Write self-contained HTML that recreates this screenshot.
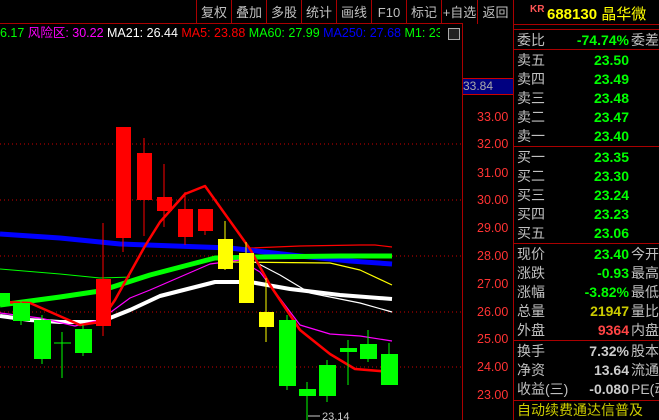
<!DOCTYPE html><html><head><meta charset="utf-8"><style>
body{margin:0;width:659px;height:420px;background:#000;overflow:hidden;position:relative;font-family:"Liberation Sans","WenQuanYi Zen Hei","Noto Sans CJK SC",sans-serif;}
.a{position:absolute;white-space:nowrap;}
.btn{position:absolute;top:0;height:24px;line-height:26px;color:#c0c0c0;font-size:13px;text-align:center;border-left:1px solid #a00;}
.r{position:absolute;left:4px;font-size:14px;color:#c0c0c0;white-space:nowrap;line-height:19px;}
.v{position:absolute;right:30px;font-weight:bold;font-size:14px;text-align:right;}
.t{position:absolute;left:114px;}
#rp{position:absolute;left:513px;top:0;width:146px;height:420px;overflow:hidden;}
</style></head><body>
<div class="btn" style="left:196px;width:34px">复权</div>
<div class="btn" style="left:231px;width:34px">叠加</div>
<div class="btn" style="left:266px;width:34px">多股</div>
<div class="btn" style="left:301px;width:34px">统计</div>
<div class="btn" style="left:336px;width:34px">画线</div>
<div class="btn" style="left:371px;width:34px">F10</div>
<div class="btn" style="left:406px;width:34px">标记</div>
<div class="btn" style="left:441px;width:35px">+自选</div>
<div class="btn" style="left:477px;width:35px">返回</div>
<div class="a" style="left:0;top:23px;width:463px;height:1px;background:#a00"></div>
<div class="a" style="left:462px;top:23px;width:1px;height:397px;background:#a00"></div>
<div class="a" style="left:513px;top:0;width:1px;height:420px;background:#a00"></div>
<div class="a" style="left:0;top:25px;width:440px;overflow:hidden;font-size:12.5px;line-height:16px">
<span style="color:#0f0">6.17 </span><span style="color:#f0f">风险区: 30.22 </span><span style="color:#fff">MA21: 26.44 </span><span style="color:#f00">MA5: 23.88 </span><span style="color:#0f0">MA60: 27.99 </span><span style="color:#00f">MA250: 27.68 </span><span style="color:#0f0">M1: 23</span><span style="color:#ccc">◇</span></div>
<div class="a" style="left:448px;top:28px;width:10px;height:10px;border:1px solid #aaa;background:#222"></div>
<div class="a" style="left:463px;top:78px;width:50px;height:15px;background:#000080;border-top:1px solid #c00;border-bottom:1px solid #c00;color:#aaa;font-size:12px;line-height:15px">33.84</div>
<div class="a" style="left:477px;top:110px;color:#f33;font-size:12.5px;line-height:14px">
<div style="position:absolute;top:0">33.00</div><div style="position:absolute;top:27px">32.00</div><div style="position:absolute;top:56px">31.00</div><div style="position:absolute;top:83px">30.00</div><div style="position:absolute;top:111px">29.00</div><div style="position:absolute;top:139px">28.00</div><div style="position:absolute;top:167px">27.00</div><div style="position:absolute;top:195px">26.00</div><div style="position:absolute;top:222px">25.00</div><div style="position:absolute;top:250px">24.00</div><div style="position:absolute;top:278px">23.00</div></div>
<svg class="a" style="left:0;top:0" width="463" height="420">
<g stroke="#c00" stroke-width="1" stroke-dasharray="1,3">
<line x1="0" y1="144" x2="463" y2="144"/><line x1="0" y1="200" x2="463" y2="200"/><line x1="0" y1="256" x2="463" y2="256"/><line x1="0" y1="312" x2="463" y2="312"/><line x1="0" y1="367" x2="463" y2="367"/></g>
<g stroke="#c00"><line x1="463" y1="117" x2="467" y2="117"/><line x1="463" y1="145" x2="467" y2="145"/><line x1="463" y1="173" x2="467" y2="173"/><line x1="463" y1="200" x2="467" y2="200"/><line x1="463" y1="228" x2="467" y2="228"/><line x1="463" y1="256" x2="467" y2="256"/><line x1="463" y1="284" x2="467" y2="284"/><line x1="463" y1="312" x2="467" y2="312"/><line x1="463" y1="340" x2="467" y2="340"/><line x1="463" y1="367" x2="467" y2="367"/><line x1="463" y1="395" x2="467" y2="395"/></g>
<g fill="none" stroke-linejoin="round">
<polyline stroke="#0f0" stroke-width="1" points="0,269 60,274 100,278 130,277"/>
<polyline stroke="#f00" stroke-width="1.2" points="250,248 300,246 360,245 375,245 392,247"/>
<polyline stroke="#ff0" stroke-width="1.2" points="230,262 330,263 360,270 392,285"/>
<polyline stroke="#fff" stroke-width="1.2" points="255,262 280,275 310,293 360,303 392,312"/>
<polyline stroke="#00f" stroke-width="5" points="0,234 60,238 120,244 230,248 300,256 350,261 392,264"/>
<polyline stroke="#0f0" stroke-width="5" points="0,305 60,297 100,291 150,275 215,258 260,257 340,256 392,256"/>
<polyline stroke="#fff" stroke-width="4" points="0,316 30,320 60,322 100,322 130,310 160,296 215,282 250,282 290,289 340,295 392,299"/>
<polyline stroke="#f0f" stroke-width="1.2" points="0,313 40,318 75,326 100,320 130,298 150,290 210,264 240,260 260,272 300,325 330,334 360,336 392,341"/>
<polyline stroke="#f00" stroke-width="2.5" points="0,302 30,303 80,325 100,322 115,300 145,246 160,222 185,194 205,186 250,249 270,285 300,330 330,354 355,369 392,372"/>
</g>
<g stroke="#f00"><line x1="103" y1="223" x2="103" y2="336"/><line x1="123" y1="127" x2="123" y2="252"/><line x1="144" y1="138" x2="144" y2="236"/><line x1="164" y1="164" x2="164" y2="227"/><line x1="185" y1="192" x2="185" y2="245"/><line x1="205" y1="209" x2="205" y2="235"/></g>
<g fill="#f00"><rect x="96" y="279" width="15" height="47"/><rect x="116" y="127" width="15" height="111"/><rect x="137" y="153" width="15" height="47"/><rect x="157" y="197" width="15" height="14"/><rect x="178" y="209" width="15" height="28"/><rect x="198" y="209" width="15" height="22"/></g>
<g stroke="#ff0"><line x1="225" y1="221" x2="225" y2="270"/><line x1="246" y1="242" x2="246" y2="303"/><line x1="266" y1="278" x2="266" y2="342"/></g>
<g fill="#ff0"><rect x="218" y="239" width="15" height="30"/><rect x="239" y="253" width="15" height="50"/><rect x="259" y="312" width="15" height="15"/></g>
<g stroke="#0f0"><line x1="21" y1="300" x2="21" y2="325"/><line x1="42" y1="315" x2="42" y2="364"/><line x1="62" y1="332" x2="62" y2="378"/><line x1="54" y1="343" x2="71" y2="343"/><line x1="83" y1="325" x2="83" y2="356"/><line x1="287" y1="315" x2="287" y2="390"/><line x1="307" y1="382" x2="307" y2="420"/><line x1="327" y1="360" x2="327" y2="402"/><line x1="348" y1="340" x2="348" y2="385"/><line x1="368" y1="330" x2="368" y2="362"/><line x1="389" y1="343" x2="389" y2="385"/></g>
<g fill="#0f0"><rect x="0" y="293" width="10" height="13"/><rect x="13" y="303" width="17" height="18"/><rect x="34" y="320" width="17" height="39"/><rect x="75" y="329" width="17" height="24"/><rect x="279" y="320" width="17" height="66"/><rect x="299" y="389" width="17" height="7"/><rect x="319" y="365" width="17" height="31"/><rect x="340" y="348" width="17" height="4"/><rect x="360" y="344" width="17" height="15"/><rect x="381" y="354" width="17" height="31"/></g>
<text x="322" y="420" fill="#ccc" font-size="11" font-family="Liberation Sans">23.14</text>
<line x1="308" y1="416" x2="320" y2="416" stroke="#ccc"/>
</svg>
<div id="rp">
<div class="a" style="left:0;top:24px;width:146px;height:1px;background:#a00"></div>
<div class="a" style="left:17px;top:4px;color:#f55;font-size:10px;font-weight:bold">KR</div>
<div class="a" style="left:34px;top:3px;color:#ff0;font-size:15px;font-weight:bold">688130 <span style="font-weight:normal">晶华微</span></div>
<div class="a" style="left:0;top:29px;width:146px;height:1px;background:#a00"></div>
<div class="r" style="top:31px;width:142px">委比<span class="v" style="color:#0f0">-74.74%</span><span class="t">委差</span></div>
<div class="a" style="left:0;top:49px;width:146px;height:1px;background:#a00"></div>
<div class="r" style="top:51px;width:142px">卖五<span class="v" style="color:#0f0">23.50</span></div>
<div class="r" style="top:70px;width:142px">卖四<span class="v" style="color:#0f0">23.49</span></div>
<div class="r" style="top:89px;width:142px">卖三<span class="v" style="color:#0f0">23.48</span></div>
<div class="r" style="top:108px;width:142px">卖二<span class="v" style="color:#0f0">23.47</span></div>
<div class="r" style="top:127px;width:142px">卖一<span class="v" style="color:#0f0">23.40</span></div>
<div class="a" style="left:0;top:146px;width:146px;height:1px;background:#a00"></div>
<div class="r" style="top:148px;width:142px">买一<span class="v" style="color:#0f0">23.35</span></div>
<div class="r" style="top:167px;width:142px">买二<span class="v" style="color:#0f0">23.30</span></div>
<div class="r" style="top:186px;width:142px">买三<span class="v" style="color:#0f0">23.24</span></div>
<div class="r" style="top:205px;width:142px">买四<span class="v" style="color:#0f0">23.23</span></div>
<div class="r" style="top:224px;width:142px">买五<span class="v" style="color:#0f0">23.06</span></div>
<div class="a" style="left:0;top:243px;width:146px;height:1px;background:#a00"></div>
<div class="r" style="top:245px;width:142px">现价<span class="v" style="color:#0f0">23.40</span><span class="t">今开</span></div>
<div class="r" style="top:264px;width:142px">涨跌<span class="v" style="color:#0f0">-0.93</span><span class="t">最高</span></div>
<div class="r" style="top:283px;width:142px">涨幅<span class="v" style="color:#0f0">-3.82%</span><span class="t">最低</span></div>
<div class="r" style="top:302px;width:142px">总量<span class="v" style="color:#cc0">21947</span><span class="t">量比</span></div>
<div class="r" style="top:321px;width:142px">外盘<span class="v" style="color:#f44">9364</span><span class="t">内盘</span></div>
<div class="a" style="left:0;top:340px;width:146px;height:1px;background:#a00"></div>
<div class="r" style="top:342px;width:142px">换手<span class="v" style="color:#ccc">7.32%</span><span class="t">股本</span></div>
<div class="r" style="top:361px;width:142px">净资<span class="v" style="color:#ccc">13.64</span><span class="t">流通</span></div>
<div class="r" style="top:380px;width:142px">收益(三)<span class="v" style="color:#ccc">-0.080</span><span class="t">PE(动</span></div>
<div class="a" style="left:0;top:400px;width:146px;height:1px;background:#a00"></div>
<div class="r" style="top:401px;color:#cc0">自动续费通达信普及</div>
</div>
</body></html>
